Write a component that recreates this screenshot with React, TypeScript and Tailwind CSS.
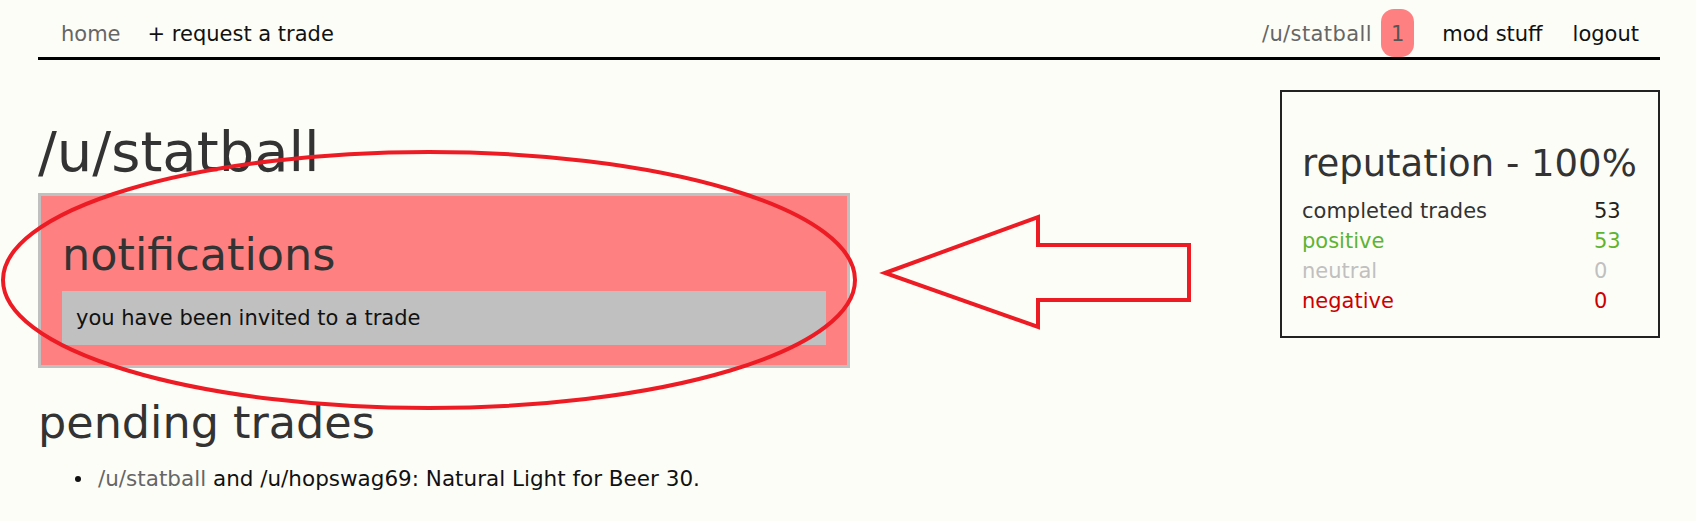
import React from "react";

const font = { fontFamily: '"DejaVu Sans", Verdana, sans-serif' };

function Annotations() {
  return (
    <svg
      className="pointer-events-none absolute left-0 top-0"
      width={1696}
      height={521}
      viewBox="0 0 1696 521"
    >
      <ellipse cx={429} cy={280} rx={426} ry={128} fill="none" stroke="#ed1c24" strokeWidth={4} />
      <polygon
        points="885,273 1038,217 1038,245 1189,245 1189,300 1038,300 1038,327"
        fill="none"
        stroke="#ed1c24"
        strokeWidth={4}
        strokeLinejoin="miter"
      />
    </svg>
  );
}

export default function App() {
  return (
    <div className="relative min-h-[521px] w-[1696px] overflow-hidden bg-[#fdfdf8] text-[21px] text-[#111]" style={font}>
      <div className="ml-[38px] w-[1622px]">
        <nav className="flex justify-between border-b-[3px] border-black pl-[8px] pr-[6px] pt-[9px] leading-[24px]">
          <div className="flex">
            <a className="pl-[15px] pr-[13px] pt-[13px] pb-[11px] text-[#666]">home</a>
            <a className="pl-[14px] pr-[15px] pt-[13px] pb-[11px] text-[#111]">+ request a trade</a>
          </div>
          <div className="flex">
            <a className="pl-[15px] pt-[13px] pb-[11px] tracking-[0.4px] text-[#666]">/u/statball</a>
            <span className="ml-[9px] rounded-[13px] bg-[#ff8080] px-[10px] pt-[13px] pb-[11px] text-[#555]">1</span>
            <a className="ml-[13px] px-[15px] pt-[13px] pb-[11px] text-[#111]">mod stuff</a>
            <a className="px-[15px] pt-[13px] pb-[11px] text-[#111]">logout</a>
          </div>
        </nav>

        <div className="flex items-start justify-between">
          <div className="flex-1">
            <h1 className="mt-[60px] text-[56px] font-normal leading-[64px] text-[#333]">/u/statball</h1>
            <div className="mt-[9px] w-[812px] border-[3px] border-[#c0c0c0] bg-[#ff8080] px-[21px] pb-[20px] pt-[33px]">
              <h2 className="text-[44.5px] font-normal leading-[52px] text-[#333]">notifications</h2>
              <div className="mt-[10px] bg-[#c0c0c0] px-[14px] py-[15px] leading-[24px] text-[#111]">
                you have been invited to a trade
              </div>
            </div>
            <h2 className="mt-[29px] text-[44.5px] font-normal leading-[52px] text-[#333]">pending trades</h2>
            <ul className="mt-[18px] text-[21.5px] leading-[24px]">
              <li className="flex items-center">
                <span className="ml-[37px] mr-[17px] inline-block h-[6px] w-[6px] rounded-full bg-[#111]" />
                <span>
                  <span className="text-[#666]">/u/statball</span>
                  <span className="text-[#111]"> and /u/hopswag69: Natural Light for Beer 30.</span>
                </span>
              </li>
            </ul>
          </div>

          <div className="mt-[30px] w-[380px] border-2 border-[#222] px-[20px] pb-[20px] pt-[50px]">
            <h2 className="mb-[10px] text-[37px] font-normal leading-[44px] text-[#333]">reputation - 100%</h2>
            <div className="grid grid-cols-[292px_1fr] leading-[30px]">
              <div className="text-[#333]">completed trades</div>
              <div className="text-[#222]">53</div>
              <div className="text-[#5db431]">positive</div>
              <div className="text-[#5db431]">53</div>
              <div className="text-[#c0c0c0]">neutral</div>
              <div className="text-[#c0c0c0]">0</div>
              <div className="text-[#cc0000]">negative</div>
              <div className="text-[#cc0000]">0</div>
            </div>
          </div>
        </div>
      </div>
      <Annotations />
    </div>
  );
}
